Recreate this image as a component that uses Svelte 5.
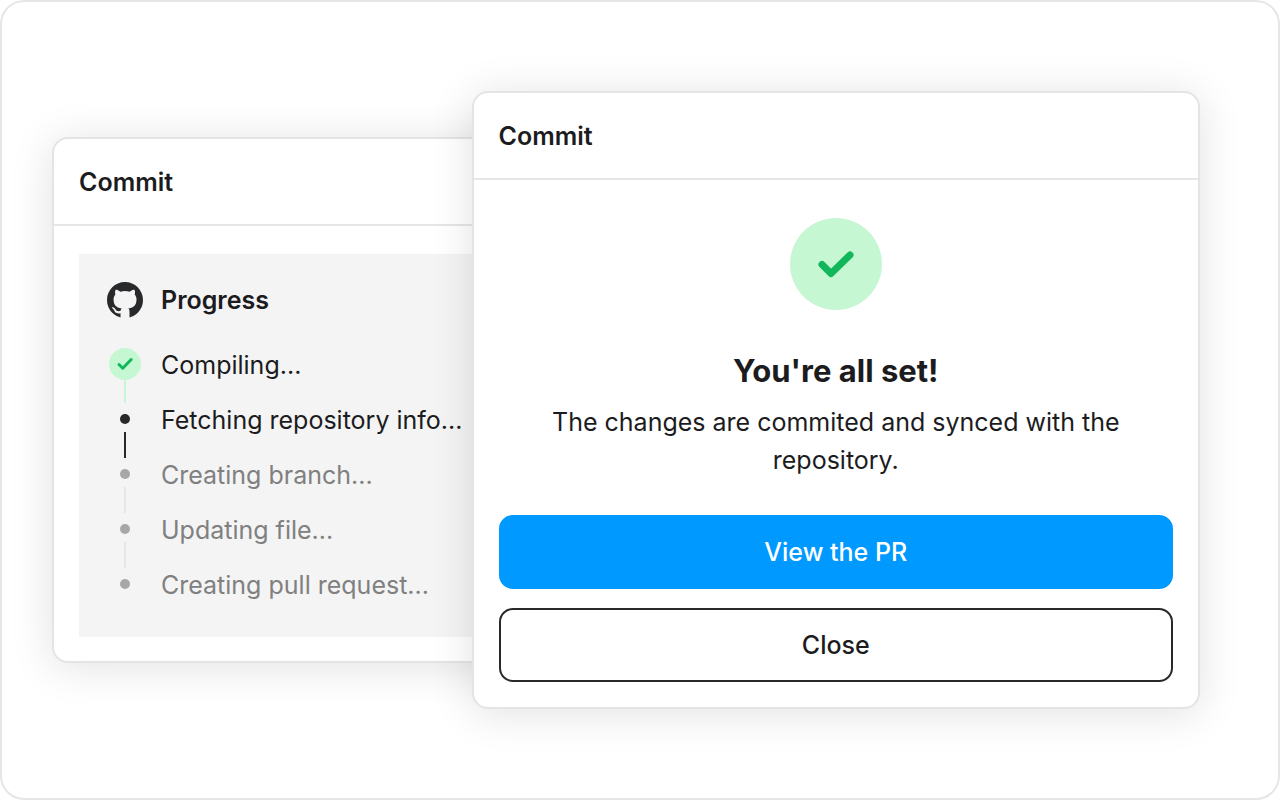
<script>
  const steps = [
    { label: 'Compiling...', status: 'done' },
    { label: 'Fetching repository info...', status: 'active' },
    { label: 'Creating branch...', status: 'pending' },
    { label: 'Updating file...', status: 'pending' },
    { label: 'Creating pull request...', status: 'pending' },
  ];
</script>

<main class="stage">
  <section class="card progress-card">
    <header>
      <h2>Commit</h2>
    </header>
    <div class="body">
      <div class="panel">
        <div class="panel-title">
          <svg class="logo" viewBox="0 0 16 16" aria-hidden="true">
            <path fill="currentColor" d="M8 0C3.58 0 0 3.58 0 8c0 3.54 2.29 6.53 5.47 7.59l.54.15v-1.87c-2.01.37-2.53-.49-2.69-.94-.09-.23-.48-.94-.82-1.13-.28-.15-.68-.52-.01-.53.63-.01 1.08.58 1.23.82.72 1.21 1.87.87 2.33.66.07-.52.28-.87.51-1.07-1.78-.2-3.64-.89-3.64-3.95 0-.87.31-1.59.82-2.15-.08-.2-.36-1.02.08-2.12 0 0 .67-.21 2.2.82.64-.18 1.32-.27 2-.27s1.36.09 2 .27c1.53-1.04 2.2-.82 2.2-.82.44 1.1.16 1.92.08 2.12.51.56.82 1.27.82 2.15 0 3.07-1.87 3.75-3.65 3.95.29.25.54.73.54 1.48v2.58l.54-.15A8.01 8.01 0 0 0 16 8c0-4.42-3.58-8-8-8z" />
          </svg>
          <h3>Progress</h3>
        </div>
        <ol>
          {#each steps as step}
            <li class={step.status}>
              <span class="rail">
                {#if step.status === 'done'}
                  <svg class="badge" viewBox="0 0 32 32" aria-hidden="true">
                    <circle cx="16" cy="16" r="16" />
                    <path d="M10 16.5l3.700 3.700L22.200 11.500" />
                  </svg>
                {:else}
                  <span class="dot"></span>
                {/if}
                <span class="line"></span>
              </span>
              <span class="label">{step.label}</span>
            </li>
          {/each}
        </ol>
      </div>
    </div>
  </section>

  <section class="card result-card">
    <header>
      <h2>Commit</h2>
    </header>
    <div class="body">
      <svg class="success" viewBox="0 0 92 92" aria-hidden="true">
        <circle cx="46" cy="46" r="46" />
        <path d="M32 46.500l9 9L60 37" />
      </svg>
      <h1>You're all set!</h1>
      <p>The changes are commited and synced with the repository.</p>
      <div class="actions">
        <button type="button" class="primary">View the PR</button>
        <button type="button">Close</button>
      </div>
    </div>
  </section>
</main>

<style>
  .stage {
    box-sizing: border-box;
    display: flex;
    align-items: center;
    min-height: 100vh;
    padding: 40px 78px 40px 50px;
    border: 2px solid #e6e6e6;
    border-radius: 24px;
    background: #fff;
    color: #1c1c1e;
    font-family: Inter, "Liberation Sans", sans-serif;
    font-size: 25px;
  }

  .card {
    box-sizing: border-box;
    min-width: 0;
    border: 2px solid #e4e4e4;
    border-radius: 16px;
    background: #fff;
    box-shadow: 0 4px 44px rgba(0, 0, 0, .12);
  }

  .progress-card {
    flex: 4 1 0;
  }

  /* overlaps the progress card */
  .result-card {
    position: relative;
    flex: 5 1 0;
    margin-left: -164px;
  }

  header {
    box-sizing: border-box;
    display: flex;
    align-items: center;
    height: 87px;
    padding: 0 25px;
    border-bottom: 2px solid #e6e6e6;
  }

  h1,
  h2,
  h3,
  p,
  ol {
    margin: 0;
  }

  h2,
  h3 {
    font-size: 25px;
    font-weight: 600;
    line-height: 36px;
  }

  .body {
    padding: 28px 25px 24px;
  }

  .panel {
    padding: 28px;
    background: #f4f4f4;
  }

  .panel-title {
    display: flex;
    gap: 18px;
    align-items: center;
    margin-bottom: 30px;
  }

  .logo {
    width: 36px;
    height: 36px;
    color: #28292b;
  }

  ol {
    padding: 0;
    list-style: none;
  }

  li {
    display: flex;
    gap: 18px;
    height: 55px;
  }

  li:last-child {
    height: 41px;
  }

  .rail {
    display: flex;
    flex-direction: column;
    align-items: center;
    width: 36px;
  }

  .label {
    line-height: 34px;
    white-space: nowrap;
  }

  .badge {
    width: 32px;
    height: 32px;
  }

  circle {
    fill: #c5f7d2;
  }

  .badge path,
  .success path {
    fill: none;
    stroke: #12b75b;
    stroke-width: 3;
    stroke-linecap: round;
    stroke-linejoin: round;
  }

  .dot {
    width: 10px;
    height: 10px;
    margin: 11px 0 8px;
    border-radius: 50%;
    background: #28292b;
  }

  .line {
    flex: 1;
    width: 2px;
    background: #28292b;
  }

  .done .line {
    background: #c5f7d2;
  }

  .pending {
    color: #808080;
  }

  .pending .dot {
    background: #a6a8a7;
  }

  .pending .line {
    background: #e6e6e6;
  }

  li:last-child .line {
    display: none;
  }

  .result-card .body {
    display: flex;
    flex-direction: column;
    align-items: center;
    padding: 38px 25px 25px;
    text-align: center;
  }

  .success {
    width: 92px;
    height: 92px;
  }

  .success path {
    stroke-width: 7;
  }

  h1 {
    margin-top: 41px;
    font-size: 31px;
    font-weight: 700;
    line-height: 40px;
  }

  p {
    margin-top: 12px;
    line-height: 38px;
  }

  .actions {
    display: flex;
    flex-direction: column;
    gap: 19px;
    align-self: stretch;
    margin-top: 36px;
  }

  button {
    height: 74px;
    border: 2px solid #28292b;
    border-radius: 14px;
    background: #fff;
    color: #1c1c1e;
    font: inherit;
    font-weight: 500;
    cursor: pointer;
  }

  .primary {
    border-color: #0099ff;
    background: #0099ff;
    color: #fff;
  }
</style>
